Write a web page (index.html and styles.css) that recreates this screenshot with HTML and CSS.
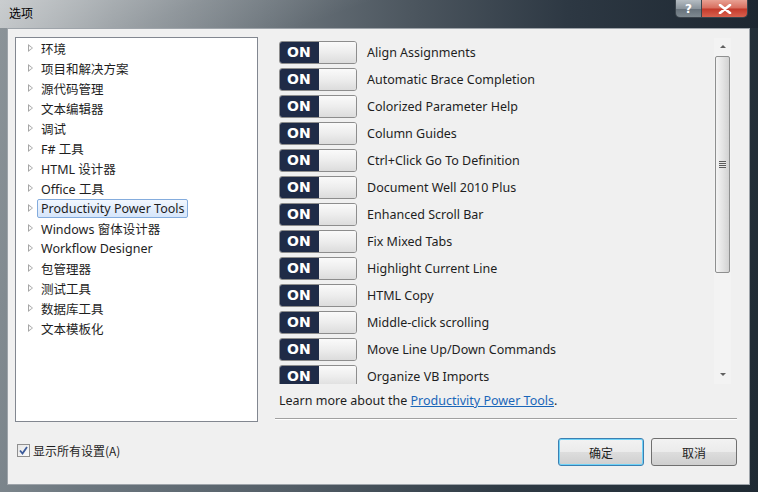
FILE: index.html
```html
<!DOCTYPE html>
<html lang="zh-CN">
<head>
    <meta charset="UTF-8">
    <title>选项</title>
    <link rel="stylesheet" href="styles.css">
</head>
<body>
    <div class="window">
        <div class="titlebar">
            <span class="title">选项</span>
            <div class="caption-buttons">
                <div class="cap-btn help-btn">?</div>
                <div class="cap-btn close-btn">
                    <svg width="14" height="10" viewBox="0 0 14 10"><path d="M2 1 L12 9 M12 1 L2 9" stroke="#fff" stroke-width="2.6" stroke-linecap="round"/></svg>
                </div>
            </div>
        </div>

        <div class="client">
            <div class="main">
                <div class="tree">
                    <div class="tree-item"><span class="arrow"></span><span>环境</span></div>
                    <div class="tree-item"><span class="arrow"></span><span>项目和解决方案</span></div>
                    <div class="tree-item"><span class="arrow"></span><span>源代码管理</span></div>
                    <div class="tree-item"><span class="arrow"></span><span>文本编辑器</span></div>
                    <div class="tree-item"><span class="arrow"></span><span>调试</span></div>
                    <div class="tree-item"><span class="arrow"></span><span>F# 工具</span></div>
                    <div class="tree-item"><span class="arrow"></span><span>HTML 设计器</span></div>
                    <div class="tree-item"><span class="arrow"></span><span>Office 工具</span></div>
                    <div class="tree-item selected"><span class="arrow"></span><span class="label">Productivity Power Tools</span></div>
                    <div class="tree-item"><span class="arrow"></span><span>Windows 窗体设计器</span></div>
                    <div class="tree-item"><span class="arrow"></span><span>Workflow Designer</span></div>
                    <div class="tree-item"><span class="arrow"></span><span>包管理器</span></div>
                    <div class="tree-item"><span class="arrow"></span><span>测试工具</span></div>
                    <div class="tree-item"><span class="arrow"></span><span>数据库工具</span></div>
                    <div class="tree-item"><span class="arrow"></span><span>文本模板化</span></div>
                </div>

                <div class="settings">
                    <div class="features">
                        <div class="feature-list">
                            <div class="feature"><div class="toggle"><span class="on">ON</span><span class="knob"></span></div><span>Align Assignments</span></div>
                            <div class="feature"><div class="toggle"><span class="on">ON</span><span class="knob"></span></div><span>Automatic Brace Completion</span></div>
                            <div class="feature"><div class="toggle"><span class="on">ON</span><span class="knob"></span></div><span>Colorized Parameter Help</span></div>
                            <div class="feature"><div class="toggle"><span class="on">ON</span><span class="knob"></span></div><span>Column Guides</span></div>
                            <div class="feature"><div class="toggle"><span class="on">ON</span><span class="knob"></span></div><span>Ctrl+Click Go To Definition</span></div>
                            <div class="feature"><div class="toggle"><span class="on">ON</span><span class="knob"></span></div><span>Document Well 2010 Plus</span></div>
                            <div class="feature"><div class="toggle"><span class="on">ON</span><span class="knob"></span></div><span>Enhanced Scroll Bar</span></div>
                            <div class="feature"><div class="toggle"><span class="on">ON</span><span class="knob"></span></div><span>Fix Mixed Tabs</span></div>
                            <div class="feature"><div class="toggle"><span class="on">ON</span><span class="knob"></span></div><span>Highlight Current Line</span></div>
                            <div class="feature"><div class="toggle"><span class="on">ON</span><span class="knob"></span></div><span>HTML Copy</span></div>
                            <div class="feature"><div class="toggle"><span class="on">ON</span><span class="knob"></span></div><span>Middle-click scrolling</span></div>
                            <div class="feature"><div class="toggle"><span class="on">ON</span><span class="knob"></span></div><span>Move Line Up/Down Commands</span></div>
                            <div class="feature"><div class="toggle"><span class="on">ON</span><span class="knob"></span></div><span>Organize VB Imports</span></div>
                        </div>
                        <div class="scrollbar">
                            <span class="sb-arrow up"></span>
                            <div class="sb-track">
                                <div class="sb-thumb"><span class="grip"></span></div>
                            </div>
                            <span class="sb-arrow down"></span>
                        </div>
                    </div>
                    <div class="learn-more">Learn more about the <a href="#">Productivity Power Tools</a>.</div>
                    <div class="separator"></div>
                </div>
            </div>

            <div class="footer">
                <label class="show-all">
                    <span class="checkbox">
                        <svg width="9" height="9" viewBox="0 0 9 9"><path d="M1 4.5 L3.5 7.5 L8 1" fill="none" stroke="#3b5a9a" stroke-width="1.8"/></svg>
                    </span>
                    显示所有设置(A)
                </label>
                <div class="buttons">
                    <button class="btn default">确定</button>
                    <button class="btn">取消</button>
                </div>
            </div>
        </div>
    </div>
</body>
</html>
```

FILE: styles.css
```css
* {
    margin: 0;
    padding: 0;
    box-sizing: border-box;
}

body {
    width: 758px;
    height: 492px;
    overflow: hidden;
    font-family: "Noto Sans", "Noto Sans CJK SC", sans-serif;
    font-size: 12px;
    color: #1a1a1a;
}

.window {
    width: 758px;
    height: 492px;
    display: flex;
    flex-direction: column;
    padding: 0 8px 7px 7px;
    background: linear-gradient(100deg, #8c9499 0%, #6c777f 20%, #525d66 45%, #2e3a44 70%, #1f2a33 100%);
}

/* title bar */
.titlebar {
    height: 28px;
    flex-shrink: 0;
    display: flex;
    justify-content: space-between;
    align-items: flex-start;
    margin: 0 -8px 0 -7px;
    padding-left: 9px;
    padding-right: 10px;
    background:
        linear-gradient(160deg, rgba(255,255,255,0.35) 0%, rgba(255,255,255,0.12) 25%, rgba(255,255,255,0) 45%),
        linear-gradient(90deg, #aeb3b6 0%, #8f969b 15%, #6d767d 35%, #4b555e 55%, #2d3843 75%, #1d2731 100%);
}

.title {
    font-family: "Noto Sans CJK SC", sans-serif;
    font-size: 12px;
    line-height: 26px;
    color: #000;
}

.caption-buttons {
    display: flex;
    height: 18px;
    border: 1px solid #3b444c;
    border-top: none;
    border-radius: 0 0 5px 5px;
    overflow: hidden;
}

.cap-btn {
    height: 17px;
    display: flex;
    align-items: center;
    justify-content: center;
}

.help-btn {
    width: 26px;
    color: #fff;
    font-family: "DejaVu Sans", sans-serif;
    font-weight: bold;
    font-size: 12px;
    background: linear-gradient(#b4bcc2 0%, #8a949c 50%, #66717a 52%, #7e8990 100%);
    border-right: 1px solid #3b444c;
}

.close-btn {
    width: 45px;
    background: linear-gradient(#e8a193 0%, #d76d5d 48%, #c3392a 52%, #d8614e 100%);
}

/* client area */
.client {
    flex: 1;
    display: flex;
    flex-direction: column;
    background: #f0f0f0;
    border: 1px solid #9ea4aa;
    padding: 8px 12px 0 7px;
}

.main {
    display: flex;
    gap: 17px;
}

.tree {
    width: 243px;
    height: 385px;
    background: #fff;
    border: 1px solid #828790;
}

.tree-item {
    height: 20px;
    display: flex;
    align-items: center;
    padding-left: 12px;
    font-size: 12.5px;
    color: #1e1e1e;
}

.arrow {
    width: 0;
    height: 0;
    margin-right: 8px;
    border-left: 5px solid #a6a6a6;
    border-top: 4px solid transparent;
    border-bottom: 4px solid transparent;
    position: relative;
}

.arrow::after {
    content: "";
    position: absolute;
    left: -4px;
    top: -2.5px;
    border-left: 3px solid #fff;
    border-top: 2.5px solid transparent;
    border-bottom: 2.5px solid transparent;
}

.tree-item.selected .label {
    margin-left: -4px;
    padding: 0 3px;
    height: 19px;
    line-height: 17px;
    border: 1px solid #84acdd;
    border-radius: 2px;
    background: linear-gradient(#f2f7fe, #d6e6fb);
}

/* right side */
.settings {
    width: 460px;
    display: flex;
    flex-direction: column;
}

.features {
    height: 346px;
    display: flex;
    overflow: hidden;
    margin-top: 1px;
}

.feature-list {
    flex: 1;
    padding: 3px 0 0 4px;
    display: flex;
    flex-direction: column;
    gap: 5px;
}

.feature {
    display: flex;
    align-items: center;
    gap: 10px;
    height: 22px;
    flex-shrink: 0;
    font-size: 12.5px;
    color: #1e1e1e;
}

.toggle {
    width: 78px;
    height: 23px;
    display: flex;
    border: 1px solid #8d8d8d;
    border-radius: 3px;
    overflow: hidden;
}

.toggle .on {
    width: 39px;
    background: #1f2b47;
    color: #fff;
    font-family: "DejaVu Sans", sans-serif;
    font-weight: bold;
    font-size: 14px;
    line-height: 21px;
    padding-left: 7px;
}

.toggle .knob {
    flex: 1;
    background: linear-gradient(#fafafa 0%, #ededed 50%, #dcdcdc 100%);
}

.scrollbar {
    width: 17px;
    margin-right: 4px;
    display: flex;
    flex-direction: column;
    align-items: center;
    background: #f3f3f3;
    padding-top: 7px;
}

.sb-arrow {
    width: 0;
    height: 0;
    border-left: 3px solid transparent;
    border-right: 3px solid transparent;
}

.sb-arrow.up {
    border-bottom: 3px solid #606060;
}

.sb-arrow.down {
    border-top: 3px solid #606060;
    margin-bottom: 8px;
}

.sb-track {
    flex: 1;
    width: 100%;
    padding: 8px 1px 0;
}

.sb-thumb {
    height: 217px;
    border: 1px solid #8e8f8f;
    border-radius: 2px;
    background: linear-gradient(90deg, #f4f4f4, #e4e4e4 50%, #d2d2d2);
    display: flex;
    align-items: center;
    justify-content: center;
}

.grip {
    width: 7px;
    height: 7px;
    background: repeating-linear-gradient(#5b5b5b 0 1px, #e8e8e8 1px 2px);
}

.learn-more {
    margin-top: 8px;
    padding-left: 4px;
    font-size: 12.5px;
    color: #1e1e1e;
}

.learn-more a {
    color: #1a66b9;
}

.separator {
    margin-top: 9px;
    height: 2px;
    border-top: 1px solid #a0a0a0;
    border-bottom: 1px solid #fff;
    margin-right: -2px;
}

/* footer */
.footer {
    flex: 1;
    display: flex;
    justify-content: space-between;
    align-items: flex-start;
    padding-top: 16px;
}

.show-all {
    display: flex;
    align-items: center;
    gap: 3px;
    margin-top: 4px;
    margin-left: 2px;
    font-family: "Noto Sans CJK SC", sans-serif;
    font-size: 12px;
    color: #1e1e1e;
}

.checkbox {
    width: 13px;
    height: 13px;
    border: 1px solid #8f8f8f;
    background: linear-gradient(135deg, #e6e6e6, #fbfbfb);
    display: flex;
    align-items: center;
    justify-content: center;
}

.buttons {
    display: flex;
    gap: 7px;
}

.btn {
    width: 86px;
    height: 28px;
    font-family: "Noto Sans CJK SC", sans-serif;
    font-size: 12px;
    color: #1e1e1e;
    border: 1px solid #707070;
    border-radius: 3px;
    background: linear-gradient(#f2f2f2 0%, #ebebeb 50%, #dddddd 51%, #cfcfcf 100%);
}

.btn.default {
    border-color: #3c7fb1;
    box-shadow: inset 0 0 0 1px #6fd3f8;
}
```
